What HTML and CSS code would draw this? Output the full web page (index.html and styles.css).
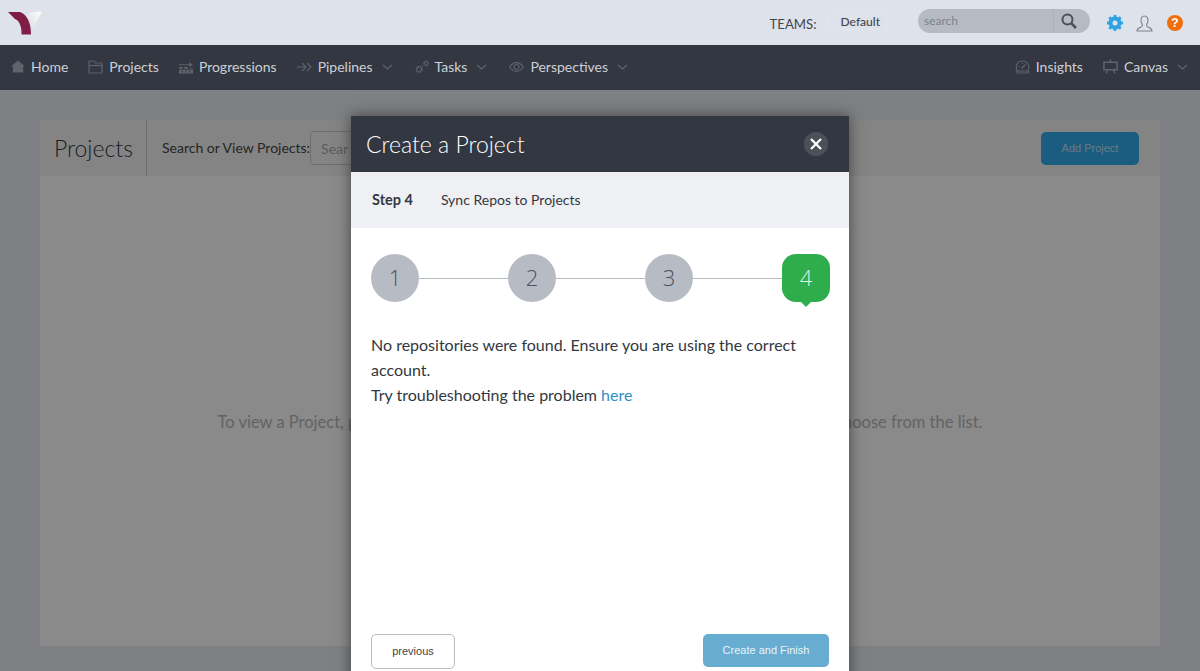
FILE: index.html
```html
<!DOCTYPE html>
<html>
<head>
    <title>Create a Project</title>
    <link rel="stylesheet" href="styles.css">
</head>
<body>
    <!-- Top bar -->
    <div class="top-bar">
        <svg class="logo" width="36" height="28" viewBox="0 0 36 28">
            <defs>
                <linearGradient id="logo-fade" x1="0" y1="1" x2="1" y2="0">
                    <stop offset="0" stop-color="#cfd4de"/>
                    <stop offset="1" stop-color="#ffffff"/>
                </linearGradient>
            </defs>
            <path d="M22 25 L34 2.500 L24 3 L18 7 Z" fill="url(#logo-fade)"/>
            <path d="M0 3 L12 3 C18 5 23 12 23 25.500 L13.500 25.500 C14 18 11 11 7 10 Z" fill="#7f1d47"/>
        </svg>
        <div class="top-right">
            <span class="teams-label">TEAMS:</span>
            <span class="teams-value">Default</span>
            <div class="top-search">
                <span class="top-search-text">search</span>
                <span class="top-search-btn">
                    <svg width="16" height="16" viewBox="0 0 16 16" fill="none" stroke="#4a4f59" stroke-width="2"><circle cx="6.500" cy="6.500" r="5"/><path d="M10.500 10.500 L15 15" stroke-width="2.500"/></svg>
                </span>
            </div>
            <svg class="top-icon" width="16" height="16" viewBox="0 0 16 16"><circle cx="8" cy="8" r="4.500" fill="none" stroke="#2ea3e3" stroke-width="4"/><g stroke="#2ea3e3" stroke-width="2.800"><path d="M8 0 V3"/><path d="M8 13 V16"/><path d="M0 8 H3"/><path d="M13 8 H16"/><path d="M2.300 2.300 L4.300 4.300"/><path d="M11.700 11.700 L13.700 13.700"/><path d="M2.300 13.700 L4.300 11.700"/><path d="M11.700 4.300 L13.700 2.300"/></g></svg>
            <svg class="top-icon" width="17" height="17" viewBox="0 0 17 17" fill="none" stroke="#7d828c" stroke-width="1.100"><path d="M8.500 1 C5.800 1 4.800 3.200 5 5.800 C5.200 8 6 9 6.500 9.800 C6.700 11 6 11.500 4.500 12.200 C2.500 13 1 13.600 1 16 H16 C16 13.600 14.500 13 12.500 12.200 C11 11.500 10.300 11 10.500 9.800 C11 9 11.800 8 12 5.800 C12.200 3.200 11.200 1 8.500 1 Z"/></svg>
            <span class="help-icon">?</span>
        </div>
    </div>

    <!-- Main nav -->
    <div class="nav-bar">
        <a class="nav-item">
            <svg width="14" height="13" viewBox="0 0 15 13" fill="#5f636c"><path d="M7.500 0 L15 6.500 H13 V13 H2 V6.500 H0 Z"/></svg>
            Home
        </a>
        <a class="nav-item">
            <svg width="15" height="14" viewBox="0 0 15 14" fill="none" stroke="#5f636c" stroke-width="1.200"><path d="M1 12 V2 Q1 1 2 1 H6 L7.500 3 H13 Q14 3 14 4 V12 Q14 13 13 13 H2 Q1 13 1 12 Z"/><path d="M1 5.500 H14"/></svg>
            Projects
        </a>
        <a class="nav-item">
            <svg width="14" height="14" viewBox="0 0 15 14" fill="#5f636c"><path d="M0 4 H11 V2 L15 4.500 L11 7 V5 H0 Z"/><path d="M0 7 H4 V9 H0 Z M5.500 7 H9.500 V9 H5.500 Z M11 8 H15 V9 H11 Z"/><path d="M0 10 H15 V14 H0 Z M3 11 V13 H4 V11 Z M7 11 V13 H8 V11 Z M11 11 V13 H12 V11 Z" fill-rule="evenodd"/></svg>
            Progressions
        </a>
        <a class="nav-item">
            <svg width="15" height="10" viewBox="0 0 15 10" fill="none" stroke="#5f636c" stroke-width="1.100"><path d="M0 5 H9"/><path d="M5 1 L9 5 L5 9"/><path d="M10 1 L14 5 L10 9"/></svg>
            Pipelines
            <svg class="caret" width="11" height="6" viewBox="0 0 11 6" fill="none" stroke="#5f636c" stroke-width="1.200"><path d="M1 1 L5.500 5 L10 1"/></svg>
        </a>
        <a class="nav-item">
            <svg width="14" height="14" viewBox="0 0 15 14" fill="none" stroke="#5f636c"><circle cx="4.500" cy="9.500" r="2.800" stroke-width="2" stroke-dasharray="1.500 .7"/><circle cx="11.800" cy="3.200" r="2.100" stroke-width="1.900" stroke-dasharray="1.200 .5"/><circle cx="8" cy="6" r=".8" fill="#5f636c" stroke="none"/></svg>
            Tasks
            <svg class="caret" width="11" height="6" viewBox="0 0 11 6" fill="none" stroke="#5f636c" stroke-width="1.200"><path d="M1 1 L5.500 5 L10 1"/></svg>
        </a>
        <a class="nav-item">
            <svg width="15" height="10" viewBox="0 0 15 10" fill="none" stroke="#5f636c" stroke-width="1.100"><path d="M.6 5 C3 1.500 5 .6 7.500 .6 C10 .6 12 1.500 14.400 5 C12 8.500 10 9.400 7.500 9.400 C5 9.400 3 8.500 .6 5 Z"/><circle cx="7.500" cy="5" r="2.500"/></svg>
            Perspectives
            <svg class="caret" width="11" height="6" viewBox="0 0 11 6" fill="none" stroke="#5f636c" stroke-width="1.200"><path d="M1 1 L5.500 5 L10 1"/></svg>
        </a>
        <div class="nav-spacer"></div>
        <a class="nav-item">
            <svg width="15" height="14" viewBox="0 0 15 14" fill="none" stroke="#5f636c" stroke-width="1.100"><path d="M2.500 11 C-.5 7 2 1 7.500 1 C13 1 15.500 7 12.500 11"/><path d="M1.500 11 H13.500 Q14 13 12.500 13 H2.500 Q1 13 1.500 11 Z"/><path d="M6.500 8.500 L10.500 4.500" stroke-width="1.500"/><path d="M3.500 6.500 H4.500 M7.500 3 V4"/></svg>
            Insights
        </a>
        <a class="nav-item">
            <svg width="15" height="15" viewBox="0 0 16 15" fill="none" stroke="#5f636c" stroke-width="1.600"><path d="M1 3 H15 V11 H1 Z"/><path d="M8 0 V3" /><path d="M4.500 11 L3.500 15"/><path d="M11.500 11 L12.500 15"/></svg>
            Canvas
            <svg class="caret" width="11" height="6" viewBox="0 0 11 6" fill="none" stroke="#5f636c" stroke-width="1.200"><path d="M1 1 L5.500 5 L10 1"/></svg>
        </a>
    </div>

    <div class="page">
        <div class="panel">
            <div class="panel-head">
                <div class="panel-title">Projects</div>
                <div class="panel-search">
                    <span class="panel-search-label">Search or View Projects:</span>
                    <span class="panel-search-input">Sear</span>
                </div>
                <button class="add-btn">Add Project</button>
            </div>
            <div class="panel-body">To view a Project, please enter a search term in the field above, or click the arrow and choose from the list.</div>
        </div>

        <div class="overlay"></div>

        <div class="modal">
            <div class="modal-head">
                <span class="modal-title">Create a Project</span>
                <span class="modal-close">
                    <svg width="12" height="12" viewBox="0 0 12 12" stroke="#fff" stroke-width="2.200"><path d="M1 1 L11 11"/><path d="M11 1 L1 11"/></svg>
                </span>
            </div>
            <div class="modal-step">
                <strong>Step 4</strong>
                <span>Sync Repos to Projects</span>
            </div>
            <div class="modal-body">
                <div class="stepper">
                    <span class="step">1</span>
                    <span class="step-line"></span>
                    <span class="step">2</span>
                    <span class="step-line"></span>
                    <span class="step">3</span>
                    <span class="step-line"></span>
                    <span class="step step-active">4</span>
                </div>
                <p class="message">No repositories were found. Ensure you are using the correct account.<br>Try troubleshooting the problem <a class="link">here</a></p>
                <div class="modal-foot">
                    <button class="prev-btn">previous</button>
                    <button class="finish-btn">Create and Finish</button>
                </div>
            </div>
        </div>
    </div>
</body>
</html>
```

FILE: styles.css
```css
/* Basic page setup */
html, body {
    height: 671px;
    margin: 0;
    overflow: hidden;
}

body {
    display: flex;
    flex-direction: column;
    font-family: Lato, "Open Sans", sans-serif;
    color: #333741;
}

button {
    font-family: "Liberation Sans", Arial, sans-serif;
}

/* Top bar */
.top-bar {
    height: 45px;
    flex: none;
    display: flex;
    align-items: center;
    background: #dee2ea;
}

.logo {
    margin: 1px 0 0 8px;
}

.top-right {
    margin-left: auto;
    display: flex;
    align-items: center;
}

.teams-label {
    font-size: 13.200px;
    color: #42464f;
    margin-top: 3px;
}

.teams-value {
    font-size: 12px;
    font-weight: 500;
    line-height: 15px;
    color: #42464f;
    margin: -2px 30px 0 11px;
    padding: 0 7px 0 12px;
    border: 1px solid #e2e5ec;
}

.top-search {
    width: 172px;
    height: 24px;
    display: flex;
    background: #b6bac3;
    border-radius: 12px;
    margin-top: -3px;
}

.top-search-text {
    flex: 1;
    font-size: 12px;
    line-height: 24px;
    color: #7d828c;
    padding-left: 6px;
}

.top-search-btn {
    width: 37px;
    box-sizing: border-box;
    display: flex;
    align-items: center;
    justify-content: center;
    border-left: 1px solid #adb1ba;
    padding-right: 7px;
}

.top-icon {
    margin-left: 17px;
    margin-top: 1px;
}

.top-icon + .top-icon {
    margin-left: 13px;
}

.help-icon {
    width: 16px;
    height: 16px;
    margin: 1px 17px 0 14px;
    border-radius: 50%;
    background: #ee6f0b;
    color: #fff;
    font-family: "Liberation Sans", sans-serif;
    font-size: 12px;
    font-weight: 700;
    line-height: 16px;
    text-align: center;
}

/* Main nav */
.nav-bar {
    height: 45px;
    flex: none;
    display: flex;
    align-items: center;
    background: #333741;
    padding: 0 10px 2px 11px;
    box-sizing: border-box;
    gap: 20px;
}

.nav-item {
    display: flex;
    align-items: center;
    gap: 6px;
    font-size: 14px;
    color: #cdd0d6;
}

.nav-item .caret {
    margin: 0 2px 0 3px;
}

.nav-spacer {
    flex: 1;
}

/* Page behind the modal */
.page {
    position: relative;
    flex: 1;
    padding: 30px 40px 25px;
    background: #e8eaf0;
}

.panel {
    height: 100%;
    display: flex;
    flex-direction: column;
    background: #fbfbfb;
}

.panel-head {
    height: 56px;
    flex: none;
    display: flex;
    align-items: center;
    background: #f1f1f1;
    padding-right: 21px;
}

.panel-title {
    width: 92px;
    height: 100%;
    line-height: 56px;
    padding-left: 14px;
    border-right: 1px solid #c4c4c4;
    font-size: 23px;
    font-weight: 300;
    color: #333741;
}

.panel-search {
    display: flex;
    align-items: center;
    padding-left: 15px;
    flex: 1;
}

.panel-search-label {
    font-size: 14px;
    color: #444;
    margin-top: -2px;
}

/* only the part left of the modal ever shows */
.panel-search-input {
    width: 41px;
    height: 34px;
    line-height: 34px;
    box-sizing: border-box;
    padding-left: 10px;
    border: 1px solid #c8c8c8;
    border-right: 0;
    border-radius: 4px 0 0 4px;
    font-size: 14px;
    color: #aaa;
}

.add-btn {
    width: 98px;
    height: 33px;
    border: 0;
    border-radius: 5px;
    background: #30aaea;
    color: #c0dff0;
    font-size: 11px;
}

.panel-body {
    flex: 1;
    padding-top: 236px;
    text-align: center;
    font-size: 16.500px;
    color: #b4b4b4;
}

.overlay {
    position: absolute;
    top: 0;
    left: 0;
    right: 0;
    bottom: 0;
    background: rgba(0, 0, 0, 0.45);
}

/* Modal */
.modal {
    position: absolute;
    top: 26px;
    left: 351px;
    width: 498px;
    height: 570px;
    display: flex;
    flex-direction: column;
    background: #fff;
    box-shadow: 0 0 14px rgba(0, 0, 0, 0.5);
}

.modal-head {
    height: 56px;
    flex: none;
    display: flex;
    align-items: center;
    justify-content: space-between;
    background: #333741;
    padding: 0 21px 0 15px;
}

.modal-title {
    font-size: 23px;
    font-weight: 300;
    color: #fff;
}

.modal-close {
    width: 24px;
    height: 24px;
    display: flex;
    align-items: center;
    justify-content: center;
    border-radius: 50%;
    background: #4c5059;
}

.modal-step {
    height: 56px;
    box-sizing: border-box;
    flex: none;
    display: flex;
    align-items: center;
    gap: 28px;
    padding: 0 0 2px 21px;
    background: #eff0f4;
    font-size: 14px;
}

.modal-step strong {
    font-size: 14.500px;
}

.modal-body {
    flex: 1;
    display: flex;
    flex-direction: column;
    padding: 26px 19px 17px 20px;
}

/* Step circles */
.stepper {
    display: flex;
    align-items: center;
}

.step {
    width: 48px;
    height: 48px;
    flex: none;
    border-radius: 50%;
    background: #b7bbc4;
    color: #4d515b;
    font-family: "Open Sans", sans-serif;
    font-size: 22px;
    font-weight: 300;
    line-height: 46px;
    text-align: center;
}

.step-line {
    flex: 1;
    height: 1px;
    background: #b7bbc4;
}

.step-active {
    position: relative;
    border-radius: 14px;
    background: #2fac4c;
    color: #dff3e4;
}

.step-active::after {
    content: "";
    position: absolute;
    left: 19px;
    bottom: -5px;
    border-left: 5px solid transparent;
    border-right: 5px solid transparent;
    border-top: 5px solid #2fac4c;
}

.message {
    margin: 30px 0 0;
    font-size: 16px;
    line-height: 25px;
    color: #333741;
}

.link {
    color: #2f8fc4;
}

/* Modal buttons */
.modal-foot {
    margin-top: auto;
    display: flex;
    justify-content: space-between;
    align-items: flex-start;
    padding-right: 1px;
}

.prev-btn {
    width: 84px;
    height: 35px;
    border: 1px solid #b7bbc4;
    border-radius: 5px;
    background: #fff;
    color: #444;
    font-size: 11px;
    padding-bottom: 3px;
}

.finish-btn {
    width: 126px;
    height: 33px;
    border: 0;
    border-radius: 5px;
    background: #67add2;
    color: #e8f2f7;
    font-size: 11px;
    padding-bottom: 3px;
}
```
